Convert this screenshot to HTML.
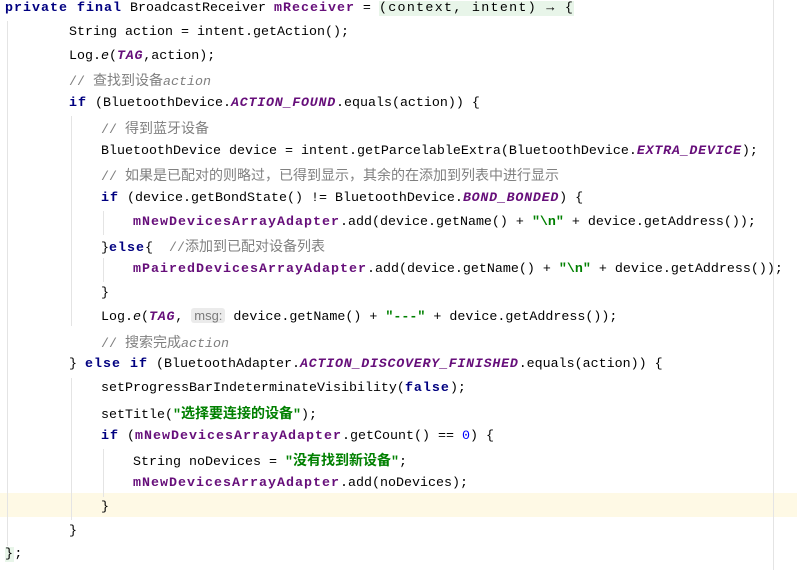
<!DOCTYPE html>
<html><head><meta charset="utf-8"><style>
body{margin:0;width:797px;height:570px;background:#fff;position:relative;overflow:hidden;font-family:"Liberation Mono","Noto Sans CJK SC",monospace;font-size:13.33px;color:#000}
.l{position:absolute;height:24px;line-height:24px;white-space:pre}
.k{color:#000080;font-weight:bold;letter-spacing:1px}
.f{color:#660e7a;font-weight:bold;letter-spacing:1px}
.s{color:#660e7a;font-style:italic;font-weight:bold;letter-spacing:.75px}
.st{color:#008000;font-weight:bold}
.c{color:#808080}
.c i{font-style:italic}
.n{color:#0000ff}
.cj{font-family:"Noto Sans CJK SC",sans-serif;font-size:14px;line-height:1;font-style:normal}
.g{position:absolute;width:1px;background:#e4e4e4}
.h{background:#e8f5e9;letter-spacing:1.3px}
.msg{background:#ebebeb;color:#7a7a7a;border-radius:3px;padding:0 3px;font-family:"Liberation Sans",sans-serif;font-size:13px;line-height:1}
</style></head><body>
<div style="position:absolute;left:0;top:493px;width:797px;height:24px;background:#fef9e5"></div>
<div class="g" style="left:7px;top:21px;height:525px"></div>
<div class="g" style="left:71px;top:116px;height:210px"></div>
<div class="g" style="left:71px;top:378px;height:142px"></div>
<div class="g" style="left:103px;top:211px;height:24px"></div>
<div class="g" style="left:103px;top:258px;height:24px"></div>
<div class="g" style="left:103px;top:449px;height:48px"></div>
<div class="g" style="left:773px;top:0;height:570px"></div>
<div class="l" style="left:5px;top:-3px"><span class="k">private final</span> BroadcastReceiver <span class="f">mReceiver</span> = <span class="h">(context, intent) → {</span></div>
<div class="l" style="left:69px;top:21px">String action = intent.getAction();</div>
<div class="l" style="left:69px;top:45px">Log.<i>e</i>(<span class="s">TAG</span>,action);</div>
<div class="l c" style="left:69px;top:71px">// <span class="cj">查找到设备</span><i>action</i></div>
<div class="l" style="left:69px;top:92px"><span class="k">if</span> (BluetoothDevice.<span class="s">ACTION_FOUND</span>.equals(action)) {</div>
<div class="l c" style="left:101px;top:119px">// <span class="cj">得到蓝牙设备</span></div>
<div class="l" style="left:101px;top:140px">BluetoothDevice device = intent.getParcelableExtra(BluetoothDevice.<span class="s">EXTRA_DEVICE</span>);</div>
<div class="l c" style="left:101px;top:166px">// <span class="cj">如果是已配对的则略过，已得到显示，其余的在添加到列表中进行显示</span></div>
<div class="l" style="left:101px;top:187px"><span class="k">if</span> (device.getBondState() != BluetoothDevice.<span class="s">BOND_BONDED</span>) {</div>
<div class="l" style="left:133px;top:211px"><span class="f">mNewDevicesArrayAdapter</span>.add(device.getName() + <span class="st">"\n"</span> + device.getAddress());</div>
<div class="l" style="left:101px;top:237px">}<span class="k">else</span>{  <span class="c">//<span class="cj">添加到已配对设备列表</span></span></div>
<div class="l" style="left:133px;top:258px"><span class="f">mPairedDevicesArrayAdapter</span>.add(device.getName() + <span class="st">"\n"</span> + device.getAddress());</div>
<div class="l" style="left:101px;top:282px">}</div>
<div class="l" style="left:101px;top:306px">Log.<i>e</i>(<span class="s">TAG</span>, <span class="msg">msg:</span> device.getName() + <span class="st">"---"</span> + device.getAddress());</div>
<div class="l c" style="left:101px;top:333px">// <span class="cj">搜索完成</span><i>action</i></div>
<div class="l" style="left:69px;top:353px">} <span class="k">else if</span> (BluetoothAdapter.<span class="s">ACTION_DISCOVERY_FINISHED</span>.equals(action)) {</div>
<div class="l" style="left:101px;top:377px">setProgressBarIndeterminateVisibility(<span class="k">false</span>);</div>
<div class="l" style="left:101px;top:404px">setTitle(<span class="st">"<span class="cj">选择要连接的设备</span>"</span>);</div>
<div class="l" style="left:101px;top:425px"><span class="k">if</span> (<span class="f">mNewDevicesArrayAdapter</span>.getCount() == <span class="n">0</span>) {</div>
<div class="l" style="left:133px;top:451px">String noDevices = <span class="st">"<span class="cj">没有找到新设备</span>"</span>;</div>
<div class="l" style="left:133px;top:472px"><span class="f">mNewDevicesArrayAdapter</span>.add(noDevices);</div>
<div class="l" style="left:101px;top:496px">}</div>
<div class="l" style="left:69px;top:520px">}</div>
<div class="l" style="left:5px;top:543px"><span class="h">}</span>;</div>
</body></html>
